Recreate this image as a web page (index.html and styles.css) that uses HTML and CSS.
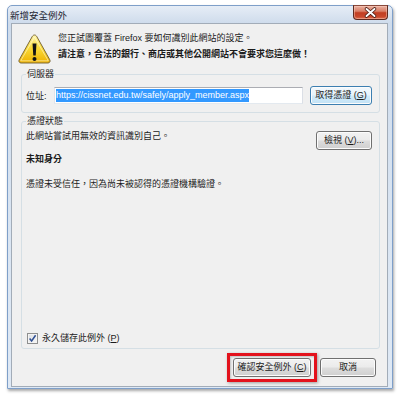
FILE: index.html
```html
<!DOCTYPE html>
<html lang="zh-Hant">
<head>
<meta charset="utf-8">
<link rel="stylesheet" href="styles.css">
</head>
<body>
<div class="window">
  <div class="titlebar">
    <span class="title">新增安全例外</span>
    <div class="close">
      <svg width="33" height="13" viewBox="0 0 33 13">
        <path d="M12.5 3 L20.5 10 M20.5 3 L12.5 10" stroke="#4a1d14" stroke-width="3.6" stroke-linecap="round"/>
        <path d="M12.5 3 L20.5 10 M20.5 3 L12.5 10" stroke="#ffffff" stroke-width="1.9" stroke-linecap="round"/>
      </svg>
    </div>
  </div>
  <div class="client">
    <div class="header">
      <svg class="warn" width="33" height="30" viewBox="0 0 33 30">
        <defs>
          <linearGradient id="wg" x1="0" y1="0" x2="0" y2="1">
            <stop offset="0" stop-color="#fff6b0"/>
            <stop offset="0.45" stop-color="#fbdc3a"/>
            <stop offset="1" stop-color="#eeb100"/>
          </linearGradient>
        </defs>
        <path d="M16.5 1 C17.5 1 18.2 1.6 18.8 2.6 L31.8 25.8 C32.6 27.3 31.7 29 30 29 L3 29 C1.3 29 0.4 27.3 1.2 25.8 L14.2 2.6 C14.8 1.6 15.5 1 16.5 1 Z" fill="url(#wg)" stroke="#7d6a3a" stroke-width="1"/>
        <path d="M16.5 3 L30.3 26.8 L2.7 26.8 Z" fill="none" stroke="#fffbe0" stroke-width="0.8" stroke-linejoin="round" opacity="0.7"/>
        <path d="M14.5 9.5 L18.5 9.5 L17.7 21.5 L15.3 21.5 Z" fill="#141414"/>
        <circle cx="16.5" cy="25" r="2" fill="#141414"/>
      </svg>
      <div class="msg">
        <p>您正試圖覆蓋 Firefox 要如何識別此網站的設定。</p>
        <p class="bold">請注意，合法的銀行、商店或其他公開網站不會要求您這麼做！</p>
      </div>
    </div>
    <fieldset class="group g1">
      <legend>伺服器</legend>
      <div class="url-row">
        <span class="url-label">位址:</span>
        <div class="input"><span class="sel">https://cissnet.edu.tw/safely/apply_member.aspx</span></div>
        <button class="btn hover get">取得憑證 (<u>G</u>)</button>
      </div>
    </fieldset>
    <fieldset class="group g2">
      <legend>憑證狀態</legend>
      <div class="g2-body">
        <div class="row1">
          <span class="line">此網站嘗試用無效的資訊識別自己。</span>
          <button class="btn view">檢視 (<u>V</u>)...</button>
        </div>
        <p class="line bold unknown">未知身分</p>
        <p class="line untrusted">憑證未受信任，因為尚未被認得的憑證機構驗證。</p>
        <div class="check-row">
          <span class="checkbox">
            <svg width="9" height="9" viewBox="0 0 9 9"><path d="M1.6 4.6 L3.6 7 L7.6 1.2" fill="none" stroke="#2f4f93" stroke-width="1.5"/></svg>
          </span>
          <span class="line">永久儲存此例外 (<u>P</u>)</span>
        </div>
      </div>
    </fieldset>
    <div class="buttons">
      <button class="btn confirm">確認安全例外 (<u>C</u>)</button>
      <button class="btn cancel">取消</button>
    </div>
  </div>
</div>
</body>
</html>
```

FILE: styles.css
```css
* { box-sizing: border-box; margin: 0; padding: 0; }
html, body { width: 400px; height: 399px; background: #ffffff; overflow: hidden; }
body {
  font-family: "Liberation Sans", "Noto Sans CJK TC", sans-serif;
  font-size: 9px;
  color: #1b1b1b;
}
.window {
  margin: 5px 0 0 7px;
  width: 386px;
  height: 384px;
  border: 1px solid #7e9fc9;
  border-radius: 5px 5px 0 0;
  background: linear-gradient(#e6edf6, #cfdcec 17px, #dae5f2 60%, #dfe9f5);
  box-shadow: 1px 2px 3px rgba(0, 0, 0, 0.35);
  display: flex;
  flex-direction: column;
}
.titlebar {
  height: 17px;
  display: flex;
  align-items: flex-start;
}
.title {
  font-size: 9.5px;
  line-height: 12px;
  margin: 4px 0 0 2px;
  color: #1e2633;
}
.close {
  margin-left: auto;
  margin-right: 4px;
  margin-top: -1px;
  width: 35px;
  height: 15px;
  border: 1px solid #5d2a20;
  border-top-color: #8a4a3c;
  border-radius: 0 0 4px 4px;
  background: linear-gradient(#eab1a2 0%, #d98068 40%, #c23e22 52%, #c8472b 80%, #dc6d4d 100%);
  box-shadow: inset 0 0 0 1px rgba(255, 210, 195, 0.45);
  display: flex;
  justify-content: center;
  align-items: center;
}
.close svg { display: block; }
.client {
  margin: 0 4px 1px 3px;
  flex: 1;
  border: 1px solid #a2acb8;
  background: #f0f0f0;
  display: flex;
  flex-direction: column;
}
.header {
  margin-top: 6px;
  padding-left: 6px;
  display: flex;
  align-items: flex-start;
}
.warn { display: block; margin-top: 4px; flex: none; }
.msg { margin-left: 7px; }
.msg p { line-height: 16px; white-space: nowrap; }
.bold { font-weight: bold; }

.group {
  min-width: 0;
  border: 1px solid #d5dfe5;
  border-radius: 3px;
  margin: 4px 7px 0 9px;
  padding: 6px 7px 7px 4px;
}
.group legend {
  line-height: 12px;
  padding: 0 1px;
  margin-left: 0;
}
.g2 { margin-top: 2px; padding-top: 3px; padding-bottom: 4px; }

.url-row {
  display: flex;
  align-items: center;
  height: 19px;
}
.url-label { width: 28px; flex: none; line-height: 12px; }
.input {
  width: 249px;
  height: 17px;
  flex: none;
  border: 1px solid;
  border-color: #abadb3 #dbdfe6 #e3e9ef #e2e3ea;
  background: #ffffff;
  padding: 1px 0 0 1px;
}
.sel {
  display: inline-block;
  background: #3399ff;
  color: #ffffff;
  line-height: 13px;
  font-size: 9px;
  white-space: nowrap;
}
.btn {
  font: inherit;
  font-size: 9px;
  height: 19px;
  border: 1px solid #707070;
  border-radius: 3px;
  background: linear-gradient(#f2f2f2, #ebebeb 48%, #dddddd 52%, #cfcfcf);
  box-shadow: inset 0 0 0 1px #fcfcfc;
  color: #1b1b1b;
  line-height: 15px;
  padding: 0;
  text-align: center;
  white-space: nowrap;
  flex: none;
}
.btn u { text-underline-offset: 1px; }
.btn.hover {
  border-color: #3c7fb1;
  background: linear-gradient(#f3f9fd, #e6f3fc 48%, #d2ebfa 52%, #c2e2f6);
}
.get { width: 62px; margin-left: 7px; }

.g2-body {
  height: 214px;
  display: flex;
  flex-direction: column;
}
.line { line-height: 12px; white-space: nowrap; }
.row1 {
  display: flex;
  justify-content: space-between;
  align-items: flex-start;
  height: 20px;
}
.view { width: 56px; margin-top: 1px; }
.unknown { margin-top: 3px; }
.untrusted { margin-top: 13px; }
.check-row {
  margin-top: auto;
  display: flex;
  align-items: center;
  height: 12px;
}
.checkbox {
  width: 11px;
  height: 11px;
  margin-left: 1px;
  margin-right: 4px;
  border: 1px solid #8e8f8f;
  background: linear-gradient(135deg, #dcdfe3, #f7f7f7);
  box-shadow: inset 0 0 0 1px #f4f4f4;
  display: flex;
  align-items: center;
  justify-content: center;
}
.checkbox svg { display: block; }
.check-row u { text-underline-offset: 1px; }

.buttons {
  margin-top: 9px;
  padding-right: 11px;
  display: flex;
  justify-content: flex-end;
  gap: 9px;
}
.confirm {
  width: 78px;
  position: relative;
}
.confirm::after {
  content: "";
  position: absolute;
  left: -7px;
  top: -6px;
  right: -7px;
  bottom: -6px;
  border: 3px solid #e3121c;
  box-shadow: 1px 1px 3px rgba(0, 0, 0, 0.35), inset 1px 1px 2px rgba(0, 0, 0, 0.2);
}
.cancel { width: 56px; }
```
